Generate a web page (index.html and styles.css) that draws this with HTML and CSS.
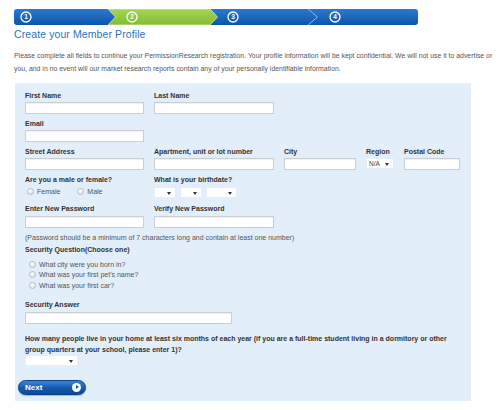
FILE: index.html
```html
<!DOCTYPE html>
<html lang="en">
<head>
<meta charset="utf-8">
<title>Create your Member Profile</title>
<link rel="stylesheet" href="styles.css">
</head>
<body>
<div class="page">
  <svg class="steps" width="404" height="16" viewBox="0 0 404 16" aria-label="Step 2 of 4">
    <defs>
      <linearGradient id="gb" x1="0" y1="0" x2="0" y2="1">
        <stop offset="0" stop-color="#2b7ad0"/>
        <stop offset="1" stop-color="#0c55ac"/>
      </linearGradient>
      <linearGradient id="gg" x1="0" y1="0" x2="0" y2="1">
        <stop offset="0" stop-color="#a6d452"/>
        <stop offset="1" stop-color="#82bd32"/>
      </linearGradient>
    </defs>
    <rect x="0" y="0" width="404" height="16" rx="3" fill="url(#gb)"/>
    <path d="M94 0 H196 L203.5 8 L196 16 H94 L101.5 8 Z" fill="url(#gg)" stroke="#d8ecb8" stroke-width="0.8"/>
    <path d="M294 0 L303.5 8 L294 16" fill="none" stroke="#8fbbe6" stroke-width="1"/>
    <g fill="none" stroke="#fff" stroke-width="1.3">
      <circle cx="12" cy="8" r="5"/>
      <circle cx="118" cy="8" r="5"/>
      <circle cx="219" cy="8" r="5"/>
      <circle cx="321" cy="8" r="5"/>
    </g>
    <g fill="#fff" font-family="Liberation Sans, Arial, sans-serif" font-weight="bold" font-size="6.5" text-anchor="middle">
      <text x="12" y="10.4">1</text>
      <text x="118" y="10.4">2</text>
      <text x="219" y="10.4">3</text>
      <text x="321" y="10.4">4</text>
    </g>
  </svg>

  <h1 class="title">Create your Member Profile</h1>

  <p class="intro">Please complete all fields to continue your PermissionResearch registration. Your profile information will be kept confidential. We will not use it to advertise or<br>you, and in no event will our market research reports contain any of your personally identifiable information.</p>

  <form class="panel">
    <div class="row">
      <div class="field"><label class="lbl">First Name</label><span class="input w119"></span></div>
      <div class="field"><label class="lbl">Last Name</label><span class="input w120"></span></div>
    </div>
    <div class="row">
      <div class="field"><label class="lbl">Email</label><span class="input w119"></span></div>
    </div>
    <div class="row">
      <div class="field"><label class="lbl">Street Address</label><span class="input w119"></span></div>
      <div class="field"><label class="lbl">Apartment, unit or lot number</label><span class="input w120"></span></div>
      <div class="field"><label class="lbl">City</label><span class="input w72"></span></div>
      <div class="field"><label class="lbl">Region</label><span class="select w28">N/A<i class="arrow"></i></span></div>
      <div class="field"><label class="lbl">Postal Code</label><span class="input w56"></span></div>
    </div>
    <div class="row row-tight">
      <div class="field w119">
        <label class="lbl">Are you a male or female?</label>
        <div class="radios">
          <span class="opt"><span class="radio"></span>Female</span>
          <span class="opt"><span class="radio"></span>Male</span>
        </div>
      </div>
      <div class="field">
        <label class="lbl">What is your birthdate?</label>
        <div class="dates">
          <span class="select w22"><i class="arrow"></i></span>
          <span class="select w22"><i class="arrow"></i></span>
          <span class="select w31"><i class="arrow"></i></span>
        </div>
      </div>
    </div>
    <div class="row row-pw">
      <div class="field"><label class="lbl">Enter New Password</label><span class="input w119"></span></div>
      <div class="field"><label class="lbl">Verify New Password</label><span class="input w120"></span></div>
    </div>
    <p class="note">(Password should be a minimum of 7 characters long and contain at least one number)</p>

    <div class="question">
      <label class="lbl">Security Question(Choose one)</label>
      <ul class="choices">
        <li><span class="radio"></span>What city were you born in?</li>
        <li><span class="radio"></span>What was your first pet's name?</li>
        <li><span class="radio"></span>What was your first car?</li>
      </ul>
    </div>

    <div class="field answer"><label class="lbl">Security Answer</label><span class="input w207"></span></div>

    <div class="household">
      <p class="lbl long">How many people live in your home at least six months of each year (if you are a full-time student living in a dormitory or other group quarters at your school, please enter 1)?</p>
      <span class="select w53"><i class="arrow"></i></span>
    </div>

    <button type="button" class="next">Next<span class="go"></span></button>
  </form>
</div>
</body>
</html>
```

FILE: styles.css
```css
html, body {
  margin: 0;
  padding: 0;
  background: #fff;
  overflow: hidden;
}

body {
  font-family: "Liberation Sans", Arial, sans-serif;
  color: #4a4a4a;
}

.page {
  padding: 9px 0 0 14px;
  width: 486px;
}

.steps {
  display: block;
}

.title {
  margin: 3px 0 0;
  font-size: 10.5px;
  line-height: 13px;
  font-weight: normal;
  color: #2f73bd;
  letter-spacing: 0.1px;
}

.intro {
  margin: 9px 0 0;
  font-size: 6.9px;
  line-height: 12.5px;
  color: #555;
  white-space: nowrap;
}

.panel {
  margin: 8px 0 0 1px;
  width: 446px;
  padding: 9px 0 6px 10px;
  background: #e2eefa;
}

.row {
  display: flex;
  gap: 10px;
  margin-bottom: 6px;
}

.field {
  display: flex;
  flex-direction: column;
  align-items: flex-start;
}

.lbl {
  display: block;
  font-size: 7px;
  line-height: 8px;
  font-weight: bold;
  color: #333;
  margin-bottom: 2px;
  white-space: nowrap;
}

.input {
  display: block;
  height: 10px;
  background: #fff;
  border: 1px solid #c9ced3;
  box-shadow: inset 0 1px 1px rgba(0,0,0,0.06);
}

.select {
  position: relative;
  display: block;
  height: 11px;
  background: #fff;
  border: 1px solid #e6edf4;
  box-sizing: border-box;
  font-size: 6.5px;
  line-height: 9px;
  color: #444;
  padding-left: 2px;
}

.arrow {
  position: absolute;
  right: 4px;
  top: 4px;
  width: 0;
  height: 0;
  border-left: 2px solid transparent;
  border-right: 2px solid transparent;
  border-top: 3px solid #333;
}

.w119 { width: 117px; }
.w120 { width: 118px; }
.w72 { width: 70px; }
.w56 { width: 54px; }
.w207 { width: 205px; }
.select.w28 { width: 28px; }
.select.w22 { width: 22px; }
.select.w31 { width: 31px; }
.select.w53 { width: 53px; }
.field.w119 { width: 119px; }

.row-tight {
  margin-bottom: 7px;
}

.radios {
  display: flex;
  gap: 17px;
  padding-left: 2px;
  height: 10px;
  align-items: center;
}

.opt {
  display: flex;
  align-items: center;
  gap: 3px;
  font-size: 7px;
  color: #555;
}

.radio {
  display: inline-block;
  width: 5px;
  height: 5px;
  border-radius: 50%;
  border: 1px solid #b9bec4;
  background: radial-gradient(circle at 40% 35%, #fff 0, #e7e9ec 60%, #cfd3d8 100%);
}

.dates {
  display: flex;
  gap: 4px;
  margin-top: 1px;
}

.row-pw .lbl {
  margin-bottom: 3px;
}

.note {
  margin: 0 0 4px;
  font-size: 7px;
  line-height: 8px;
  color: #555;
}

.question .lbl {
  margin-bottom: 5px;
}

.choices {
  list-style: none;
  margin: 0 0 10px;
  padding: 0 0 0 4px;
}

.choices li {
  display: flex;
  align-items: center;
  gap: 3px;
  height: 10.5px;
  font-size: 7px;
  color: #555;
}

.answer .lbl {
  margin-bottom: 3px;
}

.household {
  margin-top: 9px;
}

.lbl.long {
  margin: 0;
  white-space: normal;
  width: 440px;
  line-height: 11px;
}

.next {
  display: flex;
  align-items: center;
  justify-content: space-between;
  margin: 14px 0 0 -7px;
  width: 68px;
  height: 15px;
  padding: 0 4px 0 6px;
  border: 1px solid #0a3f86;
  border-radius: 8px;
  background: linear-gradient(#3b86d8, #1458ad 55%, #0d4a98);
  color: #fff;
  font-family: "Liberation Sans", Arial, sans-serif;
  font-size: 8px;
  font-weight: bold;
  cursor: pointer;
  box-shadow: 0 1px 1px rgba(0,0,0,0.25);
}

.go {
  position: relative;
  width: 9px;
  height: 9px;
  border-radius: 50%;
  background: #fff;
}

.go::after {
  content: "";
  position: absolute;
  left: 3.5px;
  top: 2px;
  border-top: 2.5px solid transparent;
  border-bottom: 2.5px solid transparent;
  border-left: 3.5px solid #1458ad;
}
```
